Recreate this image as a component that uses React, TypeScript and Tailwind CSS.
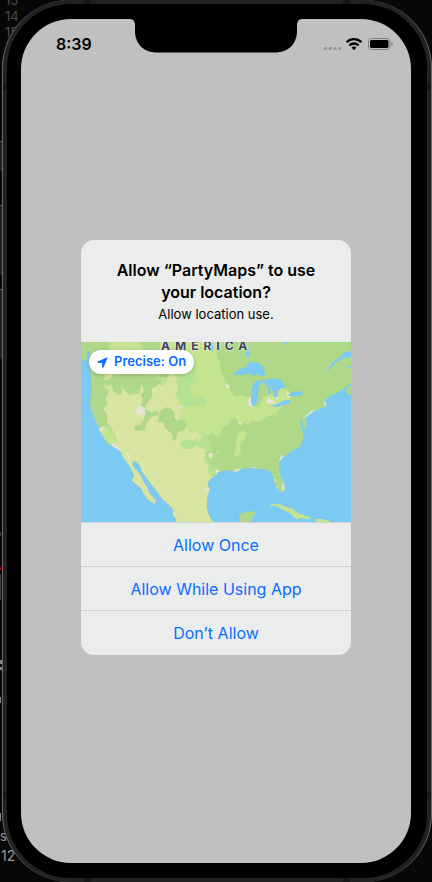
import React from "react";

const LAND =
  "M15 21V70L25 76 38 80 42 100 46 130 48 160 42 200 45 225 52 240 60 260 68 274 72 290 85 310 95 328 110 334 128 344 138 355 142 370 155 385 165 400 170 412 175 422 167 436 180 448 195 460 205 478 212 490 225 500 236 507 240 498 230 485 221 478 215 460 205 445 198 430 190 415 180 405 170 392 170 378 182 380 192 392 198 410 210 425 220 440 232 455 240 465 250 480 262 495 280 510 292 525 290 540 300 550 302 561H412L400 545 392 520 393 490 400 465 394 445 405 430 420 422 425 412 440 408 460 406 480 412 495 402 510 400 530 398 545 402 560 402 575 405 585 412 592 425 595 445 605 460 618 474 626 465 624 445 614 425 610 405 609 385 618 370 635 358 650 345 665 338 678 325 682 310 680 290 676 275 672 252 680 262 684 288 692 268 686 250 705 235 720 225 740 218 752 212 748 195 765 180 790 170 810 155 825 145V21Z";

function MapArt() {
  return (
    <svg viewBox="15 21 810 540" className="block h-full w-full" preserveAspectRatio="xMidYMid slice" aria-hidden="true">
      <defs>
        <clipPath id="land">
          <path d={LAND} />
        </clipPath>
      </defs>
      <path fill="#7ccaf2" d="M0 0H840V580H0Z" />
      <path fill="#afd889" d={LAND} />
      <g clipPath="url(#land)">
        <path fill="#c5e48f" d="M250 21H420L424 60 436 110 450 140 462 165 478 185 498 180 514 186 525 216 548 214 560 190 580 175 600 190 640 165 645 190 610 222 600 238 570 245 548 262 530 258 518 270 490 262 478 250 462 252 455 268 440 278 432 298 420 312 424 400 300 410 260 200Z" />
        <path fill="#c5e48f" d="M104 21H190L210 60 180 110 110 120 95 70ZM72 285 90 270 110 290 122 322 108 332 80 310Z" />
        <path fill="#b4e292" d="M190 50 300 60 356 80 362 132 340 160 352 190 384 182 390 212 320 214 302 178 276 150 240 130 206 95ZM290 265 330 290 360 292 390 302 412 290 424 320V410L400 424 384 372 398 348 370 335 345 350 315 330Z" />
        <path fill="#d8e4a1" d="M86 120 105 116 115 130 122 148 140 158 158 180 190 175 196 148 186 128 220 118 238 138 236 160 248 148 268 154 270 138 288 130 304 148 306 165 296 178 308 195 302 216 318 230 310 245 328 270 340 290 356 288 382 304 366 320 338 316 312 324 322 342 344 342 364 330 388 348 384 374 398 392 396 414 410 424 420 430V561H140L100 340 124 318 112 290 92 258 94 240 82 220 96 206 88 190 100 170 86 158Z" />
        <path fill="#d8e4a1" d="M270 90 300 82 308 100 292 116 308 130 290 144 262 130Z" />
        <path fill="#afd889" d="M186 130 206 116 236 128 240 150 226 164 230 184 214 204 206 222 226 232 246 226 248 240 226 246 214 262 206 286 178 288 174 272 194 268 206 250 202 232 192 214 202 190 194 180 204 164ZM252 228 272 216 290 224 298 244 300 256 320 252 332 268 326 284 306 292 300 312 290 318 288 296 268 282 262 262 244 260ZM250 105 280 116 274 130 246 124ZM395 302 406 290 424 308V350L408 344ZM388 350 424 340V402L400 388Z" />
        <path fill="#b4e292" d="M312 324 330 312 350 318 368 306 360 322 344 330 328 342Z" />
        <path fill="#c5e48f" d="M485 300 500 284 514 296 506 312 494 326 494 350 484 364 474 362 480 332ZM420 65 434 80 426 100 440 120 420 130Z" />
        <path fill="#b4e292" d="M420 340 431 350 430 362 420 358Z" />
        <path fill="#afd889" d="M552 150 566 138 582 146 584 164 574 182 556 190 548 178ZM80 140 94 154 106 150 112 170 134 182 140 164 120 120Z" />
        <path fill="#c5e48f" d="M606 165 620 158 636 166 640 184 616 194 602 188Z" />
        <g fill="#e9e4d2">
          <path d="M180 222 190 212 204 216 208 230 206 244 198 234 192 246 186 236 178 238ZM64 274 74 278 86 270 82 282 74 290ZM104 324 116 326 118 332 136 342 134 350 120 344ZM152 352 160 356 162 368 168 374 156 370ZM304 214 326 212 324 216 306 220ZM294 242 304 244 300 252ZM398 356 410 354 410 362 404 372 398 364ZM382 458 402 462 400 468 388 466ZM448 150 458 148 462 158 452 160ZM486 262 496 260 498 268 490 270Z" />
          <path d="M519 184 526 190 526 204 534 214 520 216 516 200ZM568 200 580 188 590 196 598 204 584 206ZM596 180 604 182 606 194 598 192ZM632 172 642 174 646 186 634 186ZM744 200 762 212 754 216 744 208ZM684 250 704 228 724 224 718 232 706 234 700 244ZM612 366 622 360 618 374 610 378ZM474 404 498 400 494 410 480 414ZM418 404 430 406 430 414 420 418ZM590 432 602 434 600 440 592 438ZM598 450 608 458 604 464ZM618 445 628 448 626 468 620 470ZM524 397 538 396 538 400 526 401Z" />
        </g>
      </g>
      <g fill="#7ccaf2">
        <path d="M33 44 42 52 40 66 46 80 36 76 32 60ZM15 70 22 74 28 90 15 90Z" />
        <path d="M470 119 490 102 508 97 524 77 530 84 546 82 562 96 568 124 556 122 548 116 530 124 522 114 504 120Z" />
        <path d="M510 52 518 44 522 56 518 67 511 66ZM622 21H634L630 29 624 27ZM398 25H412L410 50 402 42Z" />
        <path d="M530 150 540 138 565 134 556 144 548 154 546 180 542 202 536 213 528 212 525 196 525 170Z" />
        <path d="M560 140 572 132 600 130 616 136 630 158 614 160 606 166 606 184 594 188 592 170 582 156 584 174 578 180 576 160 568 146Z" />
        <path d="M585 212 605 206 625 196 643 194 638 206 620 211 600 217ZM634 182 650 172 678 168 680 176 668 184 646 184Z" />
        <path d="M745 118 760 95 775 78 790 66 805 52 825 48V68L802 70 780 82 766 98 756 106ZM808 93 825 96V102Z" />
      </g>
      <g fill="#afd889">
        <path d="M810 163 825 150V180L814 177Z" />
        <path d="M488 561 492 536 508 532 536 528 538 536 530 546 524 561Z" />
      </g>
      <g fill="#c5e48f">
        <path d="M578 514 590 506 612 508 630 516 648 520 668 536 684 540 706 548 702 552 672 550 660 552 642 534 620 524 600 512ZM714 552 738 552 762 558 764 561H722Z" />
      </g>
    </svg>
  );
}

function Notch() {
  return (
    <svg viewBox="0 0 174 34" className="h-[34px] w-[174px]" aria-hidden="true">
      <path d="M0 0H174C170 0 168 2 168 6V12C168 25 159 33.500 146 33.500H28C15 33.500 6 25 6 12V6C6 2 4 0 0 0Z" fill="#000" />
    </svg>
  );
}

function StatusIcons() {
  return (
    <svg viewBox="0 0 72 14" className="h-[14px] w-[72px]" role="img" aria-label="Wi-Fi connected, battery full">
      <g fill="#919191">
        <circle cx="3.500" cy="11.500" r="1.600" />
        <circle cx="8.200" cy="11.500" r="1.600" />
        <circle cx="12.900" cy="11.500" r="1.600" />
        <circle cx="17.600" cy="11.500" r="1.600" />
      </g>
      <g fill="none" stroke="#000" strokeWidth="2.400">
        <path d="M24.600 5.200A10.500 10.500 0 0 1 39.400 5.200" />
        <path d="M27.400 8.400A6.500 6.500 0 0 1 36.600 8.400" />
      </g>
      <path d="M29.600 10.600A3.500 3.500 0 0 1 34.400 10.600L32 13.200Z" fill="#000" />
      <rect x="46.500" y="1.500" width="21.500" height="11" rx="3" fill="none" stroke="#7c7c7c" />
      <rect x="48" y="3" width="18.500" height="8" rx="1.600" fill="#000" />
      <path d="M69.300 5.200C71.300 5.600 71.300 8.400 69.300 8.800Z" fill="#7c7c7c" />
    </svg>
  );
}

function Backdrop() {
  return (
    <div
      aria-hidden="true"
      className="absolute inset-0 flex flex-col justify-between overflow-hidden text-[13px] leading-4 text-[#4a4a4a]"
    >
      <div className="-mt-2 flex flex-col pl-[5px]">
        <span>13</span>
        <span>14</span>
        <span>15</span>
      </div>
      <div className="flex flex-col gap-1 pb-[18px] text-[#9a9a9a]">
        <span>s</span>
        <span className="pl-px text-sm leading-4">12</span>
      </div>
    </div>
  );
}

function SideButtons() {
  return (
    <svg viewBox="0 0 2 882" className="h-[882px] w-[2px] shrink-0" aria-hidden="true">
      <path d="M0 141H2V171H0ZM0 205H2V275H0ZM0 289H2V359H0Z" fill="#222" />
      <path d="M0 141H2V142H0ZM0 205H2V206H0ZM0 289H2V290H0Z" fill="#666" />
      <path d="M0 532H1V536H0ZM0 574H1V600H0Z" fill="#444" />
      <path d="M0 567H1V570H0Z" fill="#c00000" />
      <path d="M0 660H2V664H0ZM0 667H2V670H0ZM0 697H1V703H0ZM0 813H1V821H0Z" fill="#888" />
    </svg>
  );
}

function AntennaBands() {
  return (
    <div aria-hidden="true" className="absolute inset-0">
      <div className="absolute inset-0 flex justify-between px-[81px]">
        <i className="w-[7px] bg-[#171717]" />
        <i className="w-[7px] bg-[#171717]" />
      </div>
      <div className="absolute inset-0 flex flex-col justify-between py-[83px]">
        <i className="h-[7px] bg-[#171717]" />
        <i className="h-[7px] bg-[#171717]" />
      </div>
    </div>
  );
}

const CHOICES = ["Allow Once", "Allow While Using App", "Don’t Allow"];

function LocationDialog() {
  return (
    <section
      role="alertdialog"
      aria-labelledby="dialog-title"
      aria-describedby="dialog-text"
      className="w-[270px] overflow-hidden rounded-[13px] bg-[#ebeded]"
    >
      <header className="px-4 py-[19px] text-center text-black">
        <h1 id="dialog-title" className="text-base leading-[22px] font-semibold">
          Allow “PartyMaps” to use
          <br />
          your location?
        </h1>
        <p id="dialog-text" className="pt-[2px] text-[13px] leading-[18px]">
          Allow location use.
        </p>
      </header>
      <div className="relative h-[180px] overflow-hidden">
        <MapArt />
        <span className="absolute -top-1 left-[80px] text-xs leading-4 font-bold tracking-[5px] text-[#3d3f55] [text-shadow:0_0_2px_#fff,0_0_2px_#fff]">
          AMERICA
        </span>
        <button
          type="button"
          className="absolute top-2 left-2 flex h-6 w-[105px] items-center gap-[6px] rounded-full bg-white pl-2 text-[13px] font-semibold whitespace-nowrap text-[#0a6cff] shadow-[0_1px_4px_rgba(0,0,0,0.2)]"
        >
          <svg viewBox="0 0 11 11" className="h-[11px] w-[11px] shrink-0" aria-hidden="true">
            <path
              d="M10.200 .8 6.200 10.200Q5.700 10.700 5.500 10V5.500H1Q.3 5.300 .8 4.800Z"
              fill="currentColor"
              stroke="currentColor"
              strokeWidth=".8"
              strokeLinejoin="round"
            />
          </svg>
          Precise: On
        </button>
      </div>
      {CHOICES.map((choice) => (
        <button
          key={choice}
          type="button"
          className="block h-11 w-full border-t border-[#cfd1d2] text-base text-[#0a6cff] last:h-[45px]"
        >
          {choice}
        </button>
      ))}
    </section>
  );
}

export default function App() {
  return (
    <div className="relative flex min-h-screen bg-[#070707] font-['Inter','Liberation_Sans',sans-serif]">
      <Backdrop />
      <SideButtons />
      <div className="relative flex flex-1 overflow-hidden rounded-[68px] border-x border-[#6a6a6a] bg-[#222]">
        <AntennaBands />
        <div className="relative m-1 flex flex-1 rounded-[64px] bg-black pt-[15px] pr-4 pb-[15px] pl-[14px]">
          <main className="flex flex-1 flex-col overflow-hidden rounded-[50px] bg-[#c0c0c0] pb-[34px]">
            <div className="grid h-[47px] grid-cols-[minmax(0,1fr)_auto_minmax(0,1fr)] items-start">
              <time className="pt-[14px] pl-[35px] text-base leading-[22px] font-semibold text-black">8:39</time>
              <Notch />
              <div className="flex justify-end pt-[18px] pr-[17px]">
                <StatusIcons />
              </div>
            </div>
            <div className="flex flex-1 items-center justify-center">
              <LocationDialog />
            </div>
          </main>
        </div>
      </div>
    </div>
  );
}
